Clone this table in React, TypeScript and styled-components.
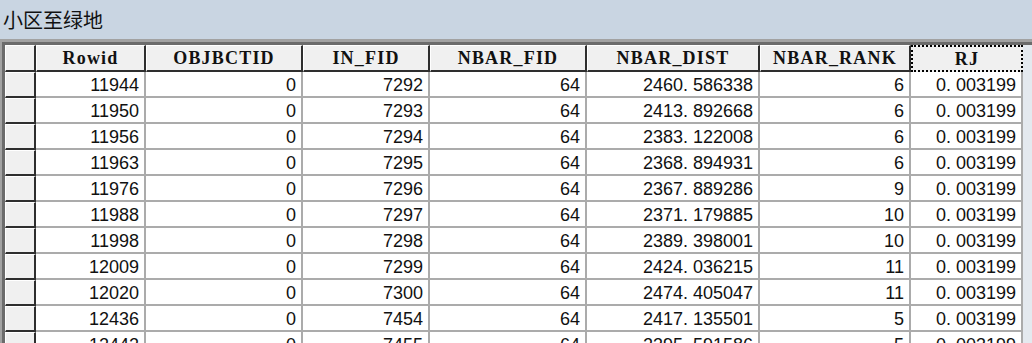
import styled, { createGlobalStyle } from 'styled-components'

const GlobalStyle = createGlobalStyle`
  html, body {
    margin: 0;
    padding: 0;
    background: #e4e9ef;
  }
  #root {
    width: 1032px;
    height: 343px;
    overflow: hidden;
  }
`;

const COLS = '31px 110px 157px 127px 157px 173px 151px 112px';

const Window = styled.div`
  display: flex;
  flex-direction: column;
  width: 1032px;
  height: 343px;
  overflow: hidden;
`;

const TitleBar = styled.div`
  height: 39px;
  flex: none;
  display: flex;
  align-items: center;
  padding-left: 3px;
  background: #c9d5e2;
  color: #111;
  font-family: "Noto Sans CJK SC", "Noto Sans", sans-serif;
  font-size: 20px;
`;

const Frame = styled.div`
  flex: 1;
  border-top: 3px solid #a2a2a2;
  border-left: 2px solid #a2a2a2;
  display: flex;
  min-height: 0;
`;

const Grid = styled.div`
  flex: 1;
  border-top: 3px solid #6b6b6b;
  border-left: 3px solid #6b6b6b;
  background: #e4e9ef;
  overflow: hidden;
`;

const Row = styled.div<{ $header?: boolean }>`
  display: grid;
  grid-template-columns: ${COLS};
  height: ${p => (p.$header ? '27px' : '26px')};
`;

const HeadCell = styled.div<{ $focus?: boolean }>`
  box-sizing: border-box;
  background: #f0f0f0;
  border-top: 1px solid #ffffff;
  border-left: 1px solid #ffffff;
  border-right: 2px solid #2e2e2e;
  border-bottom: 2px solid #2e2e2e;
  display: flex;
  align-items: center;
  justify-content: center;
  padding-top: 1px;
  font-family: "Liberation Serif", "Times New Roman", serif;
  font-weight: bold;
  font-size: 18px;
  letter-spacing: 1.2px;
  color: #111;
  white-space: nowrap;
  overflow: hidden;
  ${p => p.$focus && `
    border: 2px dotted #000;
  `}
`;

const Selector = styled.div`
  box-sizing: border-box;
  background: #f0f0f0;
  border-top: 1px solid #ffffff;
  border-left: 1px solid #ffffff;
  border-right: 2px solid #2e2e2e;
  border-bottom: 2px solid #2e2e2e;
`;

const Cell = styled.div`
  box-sizing: border-box;
  background: #ffffff;
  border-right: 2px solid #ababab;
  border-bottom: 2px solid #ababab;
  display: flex;
  align-items: center;
  justify-content: flex-end;
  padding: 2px 5px 0 0;
  font-family: "Liberation Sans", Arial, sans-serif;
  font-size: 18px;
  color: #111;
  white-space: nowrap;
  overflow: hidden;
`;

const headers = ['Rowid', 'OBJBCTID', 'IN_FID', 'NBAR_FID', 'NBAR_DIST', 'NBAR_RANK', 'RJ'];

const rows = [
  ['11944', '0', '7292', '64', '2460. 586338', '6', '0. 003199'],
  ['11950', '0', '7293', '64', '2413. 892668', '6', '0. 003199'],
  ['11956', '0', '7294', '64', '2383. 122008', '6', '0. 003199'],
  ['11963', '0', '7295', '64', '2368. 894931', '6', '0. 003199'],
  ['11976', '0', '7296', '64', '2367. 889286', '9', '0. 003199'],
  ['11988', '0', '7297', '64', '2371. 179885', '10', '0. 003199'],
  ['11998', '0', '7298', '64', '2389. 398001', '10', '0. 003199'],
  ['12009', '0', '7299', '64', '2424. 036215', '11', '0. 003199'],
  ['12020', '0', '7300', '64', '2474. 405047', '11', '0. 003199'],
  ['12436', '0', '7454', '64', '2417. 135501', '5', '0. 003199'],
  ['12442', '0', '7455', '64', '2395. 591586', '5', '0. 003199'],
];

function App() {
  return (
    <>
      <GlobalStyle />
      <Window>
        <TitleBar>小区至绿地</TitleBar>
        <Frame>
          <Grid>
            <Row $header>
              <Selector />
              {headers.map((h, i) => (
                <HeadCell key={h} $focus={i === headers.length - 1}>{h}</HeadCell>
              ))}
            </Row>
            {rows.map(r => (
              <Row key={r[0]}>
                <Selector />
                {r.map((v, i) => (
                  <Cell key={i}>{v}</Cell>
                ))}
              </Row>
            ))}
          </Grid>
        </Frame>
      </Window>
    </>
  )
}

export default App
